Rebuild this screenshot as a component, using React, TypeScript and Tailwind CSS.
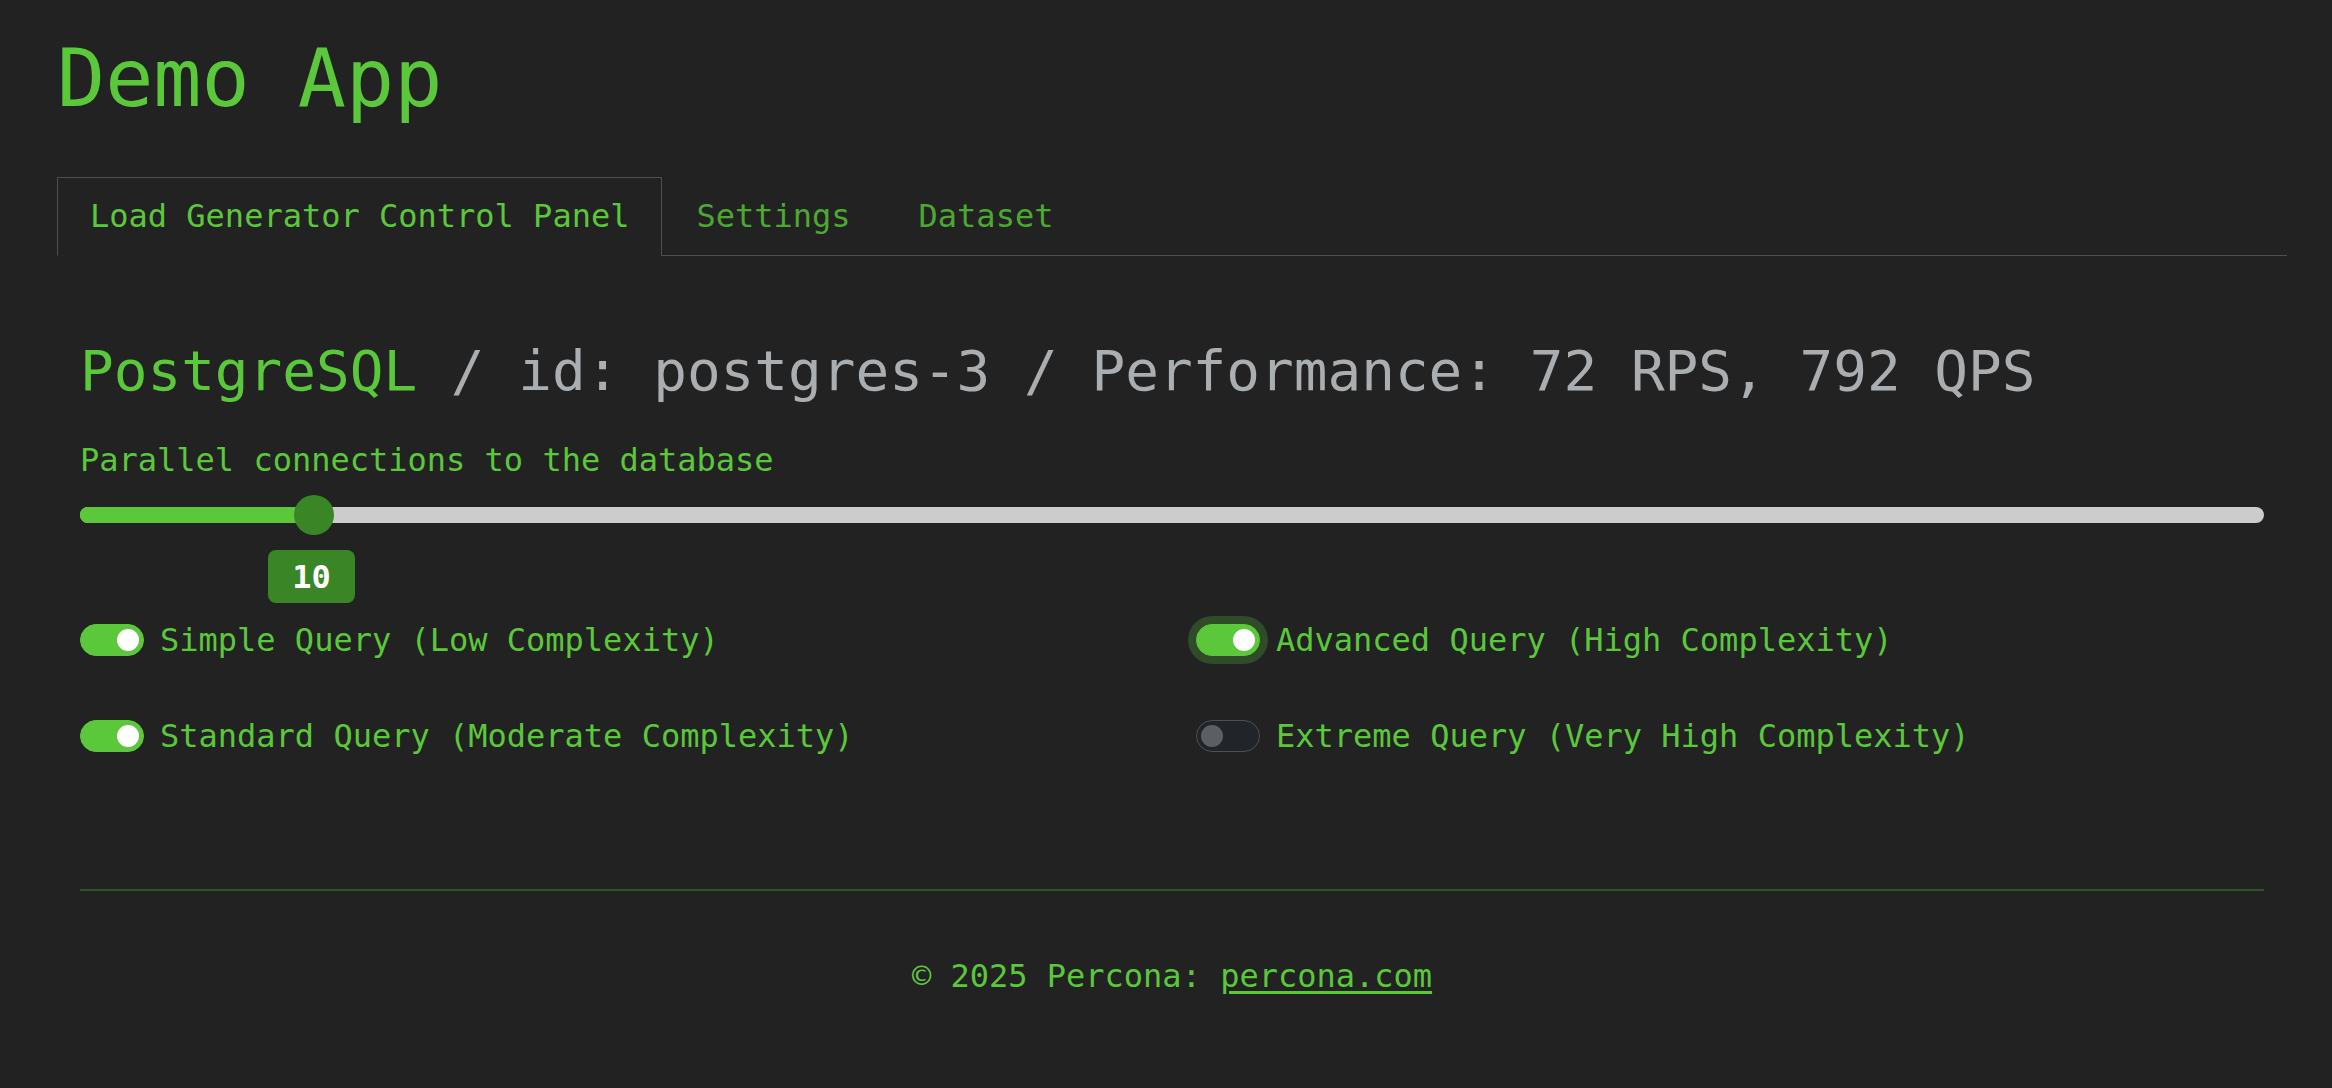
import React from "react";

function Toggle({ on, focus }: { on: boolean; focus?: boolean }) {
  return (
    <span
      className={
        "relative inline-block h-[32px] w-[64px] shrink-0 rounded-full border " +
        (on ? "border-[#5bc83b] bg-[#5bc83b]" : "border-[#4b5057] bg-[#212529]") +
        (focus ? " shadow-[0_0_0_8px_rgba(91,200,59,0.25)]" : "")
      }
    >
      <span
        className={
          "absolute top-[4px] h-[22px] w-[22px] rounded-full " +
          (on ? "right-[4px] bg-white" : "left-[4px] bg-[#5b5e62]")
        }
      />
    </span>
  );
}

function QueryRow({ label, on, focus }: { label: string; on: boolean; focus?: boolean }) {
  return (
    <div className="flex h-[48px] items-center gap-[16px]">
      <Toggle on={on} focus={focus} />
      <span className="text-[32px] leading-[48px] text-[#5bc83b]">{label}</span>
    </div>
  );
}

export default function App() {
  const pct = 234; // fill to thumb center
  return (
    <div className="min-h-screen bg-[#222222] pl-[57px] pr-[45px] pt-[31px] font-['DejaVu_Sans_Mono',monospace] text-[#5bc83b]">
      <h1 className="text-[80px] font-normal leading-[96px] text-[#5bc83b]">Demo App</h1>

      <div className="mt-[50px] flex border-b border-[#4b5057]">
        <div className="-mb-px border border-[#4b5057] border-b-[#212529] px-[32px] pt-[14px] pb-[15px] text-[32px] leading-[48px] text-[#5bc83b]">
          Load Generator Control Panel
        </div>
        <div className="-mb-px border border-transparent px-[33px] pt-[14px] pb-[15px] text-[32px] leading-[48px] text-[#4ca832]">
          Settings
        </div>
        <div className="-mb-px border border-transparent px-[33px] pt-[14px] pb-[15px] text-[32px] leading-[48px] text-[#4ca832]">
          Dataset
        </div>
      </div>

      <div className="px-[23px]">
        <h2 className="mt-[81px] text-[56px] font-normal leading-[67px]">
          <span className="text-[#5bc83b]">PostgreSQL</span>
          <span className="text-[#abaeb1]"> / id: postgres-3 / Performance: 72 RPS, 792 QPS</span>
        </h2>

        <div className="mt-[32px] text-[32px] leading-[48px] text-[#5bc83b]">Parallel connections to the database</div>

        <div className="mt-[11px] flex h-[40px] items-center">
          <div className="relative h-[16px] w-full rounded-full bg-[#cccccc]">
            <div className="h-full rounded-full bg-[#5bc83b]" style={{ width: pct }} />
            <div className="absolute left-[214px] top-[-12px] h-[40px] w-[40px] rounded-full bg-[#3a8525]" />
          </div>
        </div>

        <div className="ml-[188px] mt-[15px] flex h-[53px] w-[87px] items-center justify-center rounded-[8px] bg-[#3a8525] text-[32px] font-bold leading-[48px] text-white">
          10
        </div>

        <div className="mt-[13px] grid grid-cols-2 gap-x-[48px] gap-y-[48px]">
          <QueryRow label="Simple Query (Low Complexity)" on />
          <QueryRow label="Advanced Query (High Complexity)" on focus />
          <QueryRow label="Standard Query (Moderate Complexity)" on />
          <QueryRow label="Extreme Query (Very High Complexity)" on={false} />
        </div>

        <div className="mt-[129px] h-[2px] bg-[#30522a]" />

        <div className="mt-[61px] text-center text-[32px] leading-[48px] text-[#5bc83b]">
          © 2025 Percona:{" "}
          <a href="#" className="underline decoration-[3px] underline-offset-[4px] text-[#5bc83b]">
            percona.com
          </a>
        </div>
      </div>
    </div>
  );
}
